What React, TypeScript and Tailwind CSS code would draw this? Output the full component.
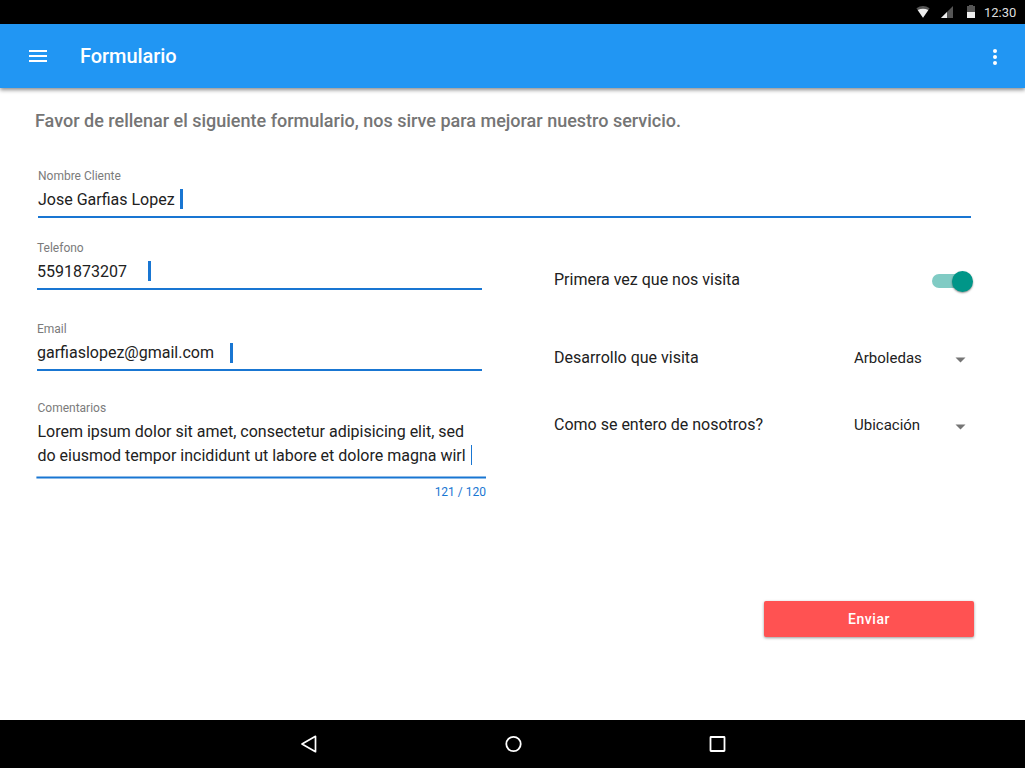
import React from 'react';

function Field({ label, children, className }: { label: string; children: React.ReactNode; className: string }) {
  return (
    <div className={`flex flex-col ${className}`}>
      <span className="text-xs leading-4 text-[#7b7b7b]">{label}</span>
      <div className="mt-1 flex h-7 items-start border-b-2 border-[#1976d2] box-content text-base leading-6 whitespace-pre">
        {children}
      </div>
    </div>
  );
}

function Caret({ className }: { className: string }) {
  return <span className={`h-5 w-[3px] shrink-0 bg-[#1976d2] ${className}`} />;
}

function Select({ label, value }: { label: string; value: string }) {
  return (
    <div className="flex h-6 items-center text-base">
      <span className="w-[300px]">{label}</span>
      <span className="w-[101px] text-[15px]">{value}</span>
      <svg className="mt-[3px]" width="11" height="6" viewBox="0 0 11 6">
        <path d="M0.5 0.5h10l-5 5z" fill="#757575" />
      </svg>
    </div>
  );
}

export default function App() {
  return (
    <div className="flex h-[768px] w-[1025px] flex-col overflow-hidden bg-white font-['Roboto',sans-serif] text-[#212121]">
      <div className="flex h-6 shrink-0 items-center bg-black">
        <svg className="ml-[916px] shrink-0" width="60" height="24" viewBox="0 0 60 24">
          <path d="M0.4 8.3Q7 3.8 13.6 8.3L7 17.8z" fill="#555" />
          <path d="M1.7 10Q7 7.3 12.3 10L7 17.8z" fill="#eee" />
          <path d="M25 18L37 6v12z" fill="#555" />
          <path d="M25 18L31 12v6z" fill="#eee" />
          <path d="M51 6h2V5h4v1h2v6h-8z" fill="#555" />
          <path d="M51 12h8v6h-8z" fill="#eee" />
        </svg>
        <span className="mt-px ml-[8px] text-[13px] text-[#dedede]">12:30</span>
      </div>
      <header className="z-10 flex h-16 shrink-0 items-center bg-[#2196f3] pl-[29px] shadow-[0_2px_4px_rgba(0,0,0,0.45)]">
        <svg width="18" height="12" viewBox="0 0 18 12" fill="white">
          <path d="M0 0h18v2H0zM0 5h18v2H0zM0 10h18v2H0z" />
        </svg>
        <h1 className="ml-[33px] text-xl font-medium tracking-[-0.05px] text-white">Formulario</h1>
        <svg className="mt-[2px] mr-[28px] ml-auto" width="4" height="16" viewBox="0 0 4 16" fill="white">
          <circle cx="2" cy="2" r="2" />
          <circle cx="2" cy="8" r="2" />
          <circle cx="2" cy="14" r="2" />
        </svg>
      </header>

      <main className="flex flex-1 flex-col">
        <h2 className="mt-[21px] ml-[35px] text-lg leading-6 font-medium text-[#757575]">
          Favor de rellenar el siguiente formulario, nos sirve para mejorar nuestro servicio.
        </h2>
        <Field label="Nombre Cliente" className="mt-[35px] ml-[38px] w-[933px]">
          <span className="w-[142px]">Jose Garfias Lopez</span>
          <Caret className="mt-px" />
        </Field>

        <div className="mt-[22px] flex">
          <div className="w-[517px]">
            <Field label="Telefono" className="ml-[37px] w-[445px]">
              <span className="w-[111px]">5591873207</span>
              <Caret className="mt-px" />
            </Field>
            <Field label="Email" className="mt-[31px] ml-[37px] w-[445px]">
              <span className="w-[193px]">garfiaslopez@gmail.com</span>
              <Caret className="mt-[2px]" />
            </Field>
            <div className="mt-[29px] ml-[36px] flex w-[450px] flex-col">
              <span className="pl-[1.5px] text-xs leading-4 text-[#7b7b7b]">Comentarios</span>
              <div className="mt-1 pl-[1.4px] text-base leading-6 whitespace-nowrap">
                <p>Lorem ipsum dolor sit amet, consectetur adipisicing elit, sed</p>
                <p className="flex">
                  <span className="w-[433.6px]">do eiusmod tempor incididunt ut labore et dolore magna wirl</span>
                  <span className="mt-px h-5 w-px bg-[#1976d2]" />
                </p>
              </div>
              <svg className="mt-2" width="450" height="3" viewBox="0 0 450 3">
                <path d="M0.4 0.5h449.6v2H0.4z" fill="#1976d2" />
              </svg>
              <span className="mt-[5px] self-end text-xs leading-4 text-[#1976d2]">121 / 120</span>
            </div>
          </div>

          <div className="flex flex-1 flex-col pt-7 pl-[37px]">
            <div className="flex h-6 items-center">
              <span className="w-[378px] text-base">Primera vez que nos visita</span>
              <div className="mt-[2px] flex h-[14px] w-9 items-center justify-end rounded-full bg-[#80cbc4]">
                <span className="-mr-[5px] size-[21px] shrink-0 rounded-full bg-[#009688] shadow-[0_1px_2px_rgba(0,0,0,0.45)]" />
              </div>
            </div>
            <div className="mt-[54px]">
              <Select label="Desarrollo que visita" value="Arboledas" />
            </div>
            <div className="mt-[43px]">
              <Select label="Como se entero de nosotros?" value="Ubicación" />
            </div>
          </div>
        </div>

        <button className="mt-[101px] ml-[764px] h-9 w-[210px] rounded-[2px] bg-[#ff5252] text-sm font-medium tracking-[0.55px] text-white shadow-[0_1px_3px_rgba(0,0,0,0.4)]">
          Enviar
        </button>
      </main>

      <nav className="flex h-12 shrink-0 items-center bg-black pl-[300px]">
        <svg width="430" height="20" viewBox="0 0 430 20" fill="none" stroke="white" strokeWidth="2">
          <path d="M15.5 2.3v15.4L2 10z" strokeLinejoin="round" strokeWidth="1.7" />
          <circle cx="213.5" cy="10" r="7.2" strokeWidth="1.8" />
          <rect x="410.5" y="3" width="14" height="14" rx="0.5" strokeWidth="1.8" />
        </svg>
      </nav>
    </div>
  );
}
